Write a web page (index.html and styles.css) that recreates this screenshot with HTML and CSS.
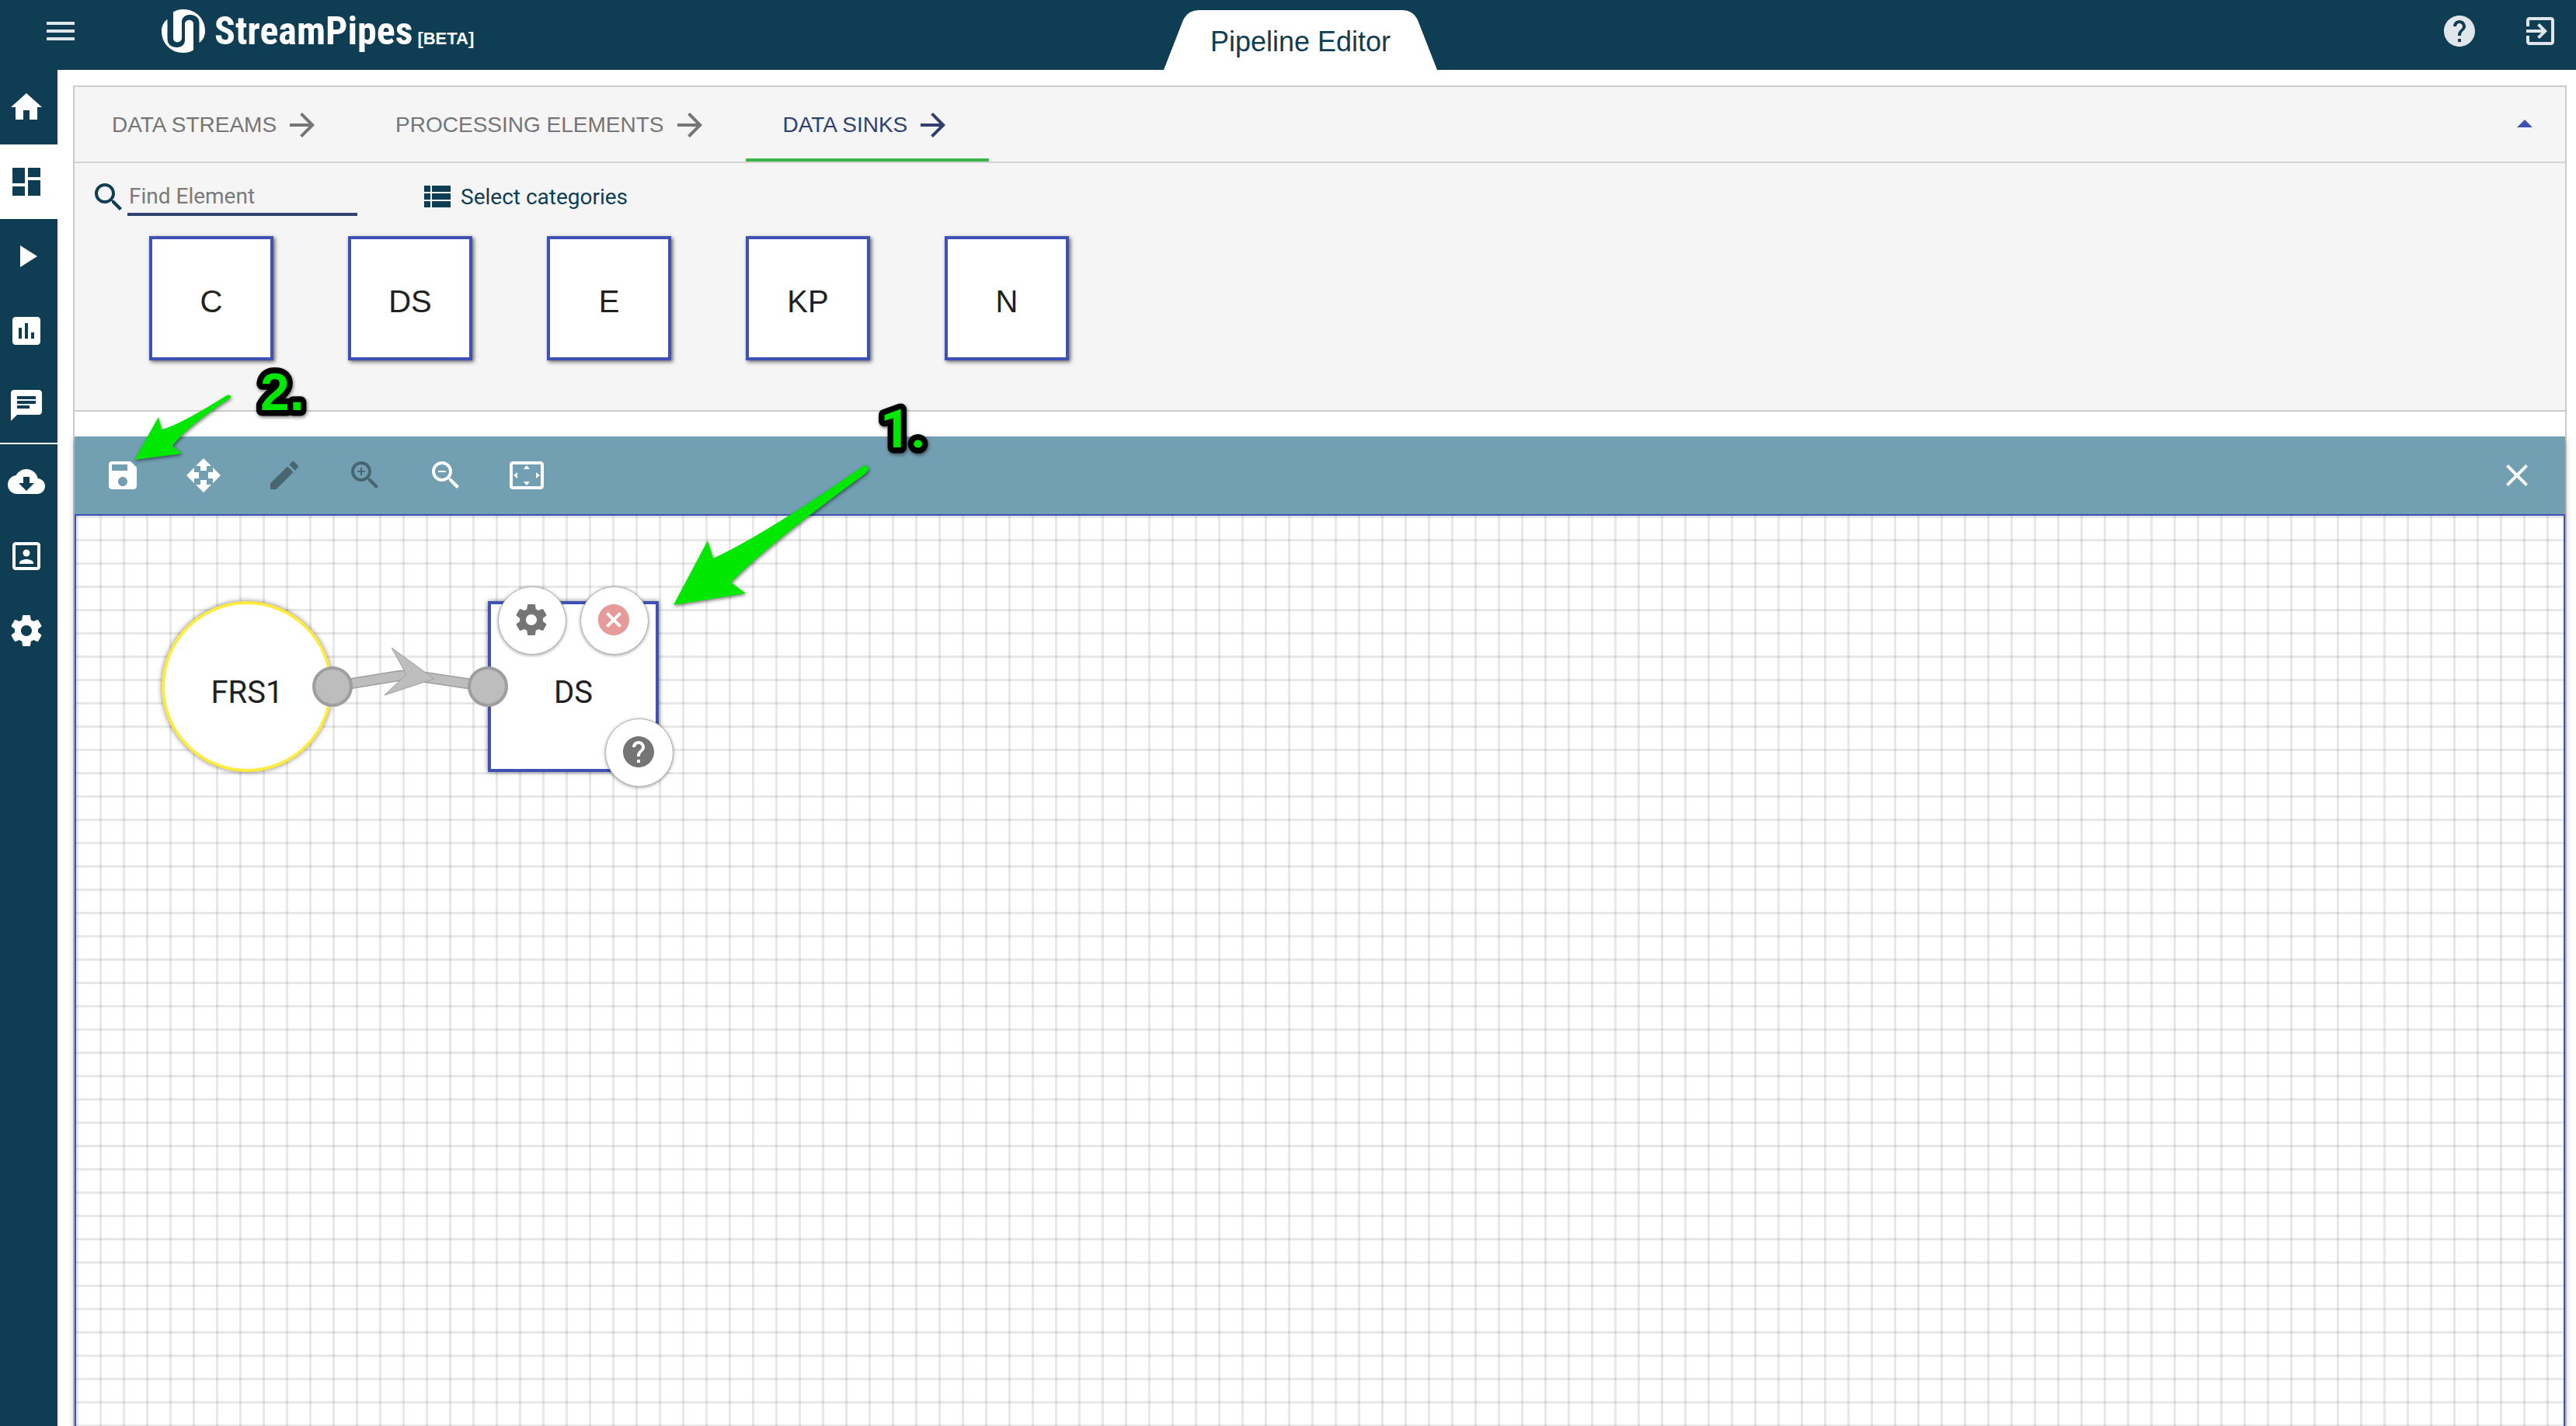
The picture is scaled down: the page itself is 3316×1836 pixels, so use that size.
FILE: index.html
```html
<!DOCTYPE html>
<html lang="en">
<head>
<meta charset="utf-8">
<title>StreamPipes - Pipeline Editor</title>
<link rel="stylesheet" href="styles.css">
</head>
<body>
<svg class="sprite" aria-hidden="true">
  <symbol id="menu" viewBox="0 0 24 24"><path d="M3 18h18v-2H3v2zm0-5h18v-2H3v2zm0-7v2h18V6H3z"/></symbol>
  <symbol id="help" viewBox="0 0 24 24"><path d="M12 2C6.48 2 2 6.48 2 12s4.48 10 10 10 10-4.480 10-10S17.520 2 12 2zm1 17h-2v-2h2v2zm2.070-7.750l-.9.920C13.450 12.900 13 13.500 13 15h-2v-.5c0-1.100.450-2.100 1.170-2.830l1.240-1.260c.370-.360.590-.860.590-1.410 0-1.100-.9-2-2-2s-2 .9-2 2H8c0-2.210 1.790-4 4-4s4 1.790 4 4c0 .880-.360 1.680-.930 2.250z"/></symbol>
  <symbol id="exit" viewBox="0 0 24 24"><path d="M10.090 15.590L11.500 17l5-5-5-5-1.410 1.410L12.670 11H3v2h9.670l-2.580 2.590zM19 3H5c-1.110 0-2 .9-2 2v4h2V5h14v14H5v-4H3v4c0 1.100.890 2 2 2h14c1.100 0 2-.9 2-2V5c0-1.100-.9-2-2-2z"/></symbol>
  <symbol id="home" viewBox="0 0 24 24"><path d="M10 20v-6h4v6h5v-8h3L12 3 2 12h3v8z"/></symbol>
  <symbol id="dashboard" viewBox="0 0 24 24"><path d="M3 13h8V3H3v10zm0 8h8v-6H3v6zm10 0h8V11h-8v10zm0-18v6h8V3h-8z"/></symbol>
  <symbol id="play" viewBox="0 0 24 24"><path d="M8 5v14l11-7z"/></symbol>
  <symbol id="chart" viewBox="0 0 24 24"><path d="M19 3H5c-1.100 0-2 .9-2 2v14c0 1.100.9 2 2 2h14c1.100 0 2-.9 2-2V5c0-1.100-.9-2-2-2zM9 17H7v-7h2v7zm4 0h-2V7h2v10zm4 0h-2v-4h2v4z"/></symbol>
  <symbol id="chat" viewBox="0 0 24 24"><path d="M20 2H4c-1.100 0-1.990.9-1.990 2L2 22l4-4h14c1.100 0 2-.9 2-2V4c0-1.100-.9-2-2-2zM6 9h12v2H6V9zm8 5H6v-2h8v2zm4-6H6V6h12v2z"/></symbol>
  <symbol id="cloud" viewBox="0 0 24 24"><path d="M19.350 10.040C18.670 6.590 15.640 4 12 4 9.110 4 6.600 5.640 5.350 8.040 2.340 8.360 0 10.910 0 14c0 3.310 2.690 6 6 6h13c2.760 0 5-2.240 5-5 0-2.640-2.050-4.780-4.650-4.960zM17 13l-5 5-5-5h3V9h4v4h3z"/></symbol>
  <symbol id="portrait" viewBox="0 0 24 24"><path d="M12 12.250c1.240 0 2.250-1.010 2.250-2.250S13.240 7.750 12 7.750 9.750 8.760 9.750 10s1.010 2.250 2.250 2.250zm4.500 4c0-1.500-3-2.250-4.500-2.250s-4.500.750-4.500 2.250V17h9v-.750zM19 3H5c-1.100 0-2 .9-2 2v14c0 1.100.9 2 2 2h14c1.100 0 2-.9 2-2V5c0-1.100-.9-2-2-2zm0 16H5V5h14v14z"/></symbol>
  <symbol id="gear" viewBox="0 0 24 24"><path d="M19.430 12.980c.040-.320.070-.640.070-.980s-.030-.660-.070-.980l2.110-1.650c.190-.150.240-.420.120-.640l-2-3.460c-.120-.220-.390-.300-.610-.220l-2.490 1c-.520-.400-1.080-.730-1.690-.980l-.380-2.650C14.460 2.180 14.250 2 14 2h-4c-.250 0-.460.180-.490.420l-.380 2.650c-.610.250-1.170.590-1.690.980l-2.490-1c-.230-.090-.490 0-.610.220l-2 3.460c-.130.220-.070.490.120.640l2.110 1.650c-.040.320-.070.650-.070.980s.030.660.070.980l-2.110 1.650c-.190.150-.240.420-.120.640l2 3.460c.120.220.390.300.610.220l2.490-1c.520.400 1.080.730 1.690.980l.380 2.650c.030.240.240.420.490.420h4c.250 0 .460-.180.490-.420l.380-2.650c.610-.250 1.170-.590 1.690-.980l2.490 1c.230.090.490 0 .610-.220l2-3.460c.120-.220.070-.490-.120-.640l-2.110-1.650zM12 15.500c-1.930 0-3.500-1.570-3.500-3.500s1.570-3.500 3.500-3.500 3.500 1.570 3.500 3.500-1.570 3.500-3.500 3.500z"/></symbol>
  <symbol id="arrow" viewBox="0 0 24 24"><path d="M12 4l-1.410 1.410L16.170 11H4v2h12.170l-5.580 5.590L12 20l8-8z"/></symbol>
  <symbol id="up" viewBox="0 0 24 24"><path d="M7 14l5-5 5 5z"/></symbol>
  <symbol id="search" viewBox="0 0 24 24"><path d="M15.500 14h-.790l-.280-.270C15.410 12.590 16 11.110 16 9.500 16 5.910 13.090 3 9.500 3S3 5.910 3 9.500 5.910 16 9.500 16c1.610 0 3.090-.590 4.230-1.570l.270.280v.790l5 4.990L20.490 19l-4.990-5zm-6 0C7.010 14 5 11.990 5 9.500S7.010 5 9.500 5 14 7.010 14 9.500 11.990 14 9.500 14z"/></symbol>
  <symbol id="list" viewBox="0 0 24 24"><path d="M4 14h4v-4H4v4zm0 5h4v-4H4v4zM4 9h4V5H4v4zm5 5h12v-4H9v4zm0 5h12v-4H9v4zM9 5v4h12V5H9z"/></symbol>
  <symbol id="save" viewBox="0 0 24 24"><path d="M17 3H5c-1.110 0-2 .9-2 2v14c0 1.100.890 2 2 2h14c1.100 0 2-.9 2-2V7l-4-4zm-5 16c-1.660 0-3-1.340-3-3s1.340-3 3-3 3 1.340 3 3-1.340 3-3 3zm3-10H5V5h10v4z"/></symbol>
  <symbol id="move" viewBox="0 0 24 24"><path d="M10 9h4V6h3l-5-5-5 5h3v3zm-1 1H6V7l-5 5 5 5v-3h3v-4zm14 2l-5-5v3h-3v4h3v3l5-5zm-9 3h-4v3H7l5 5 5-5h-3v-3z"/></symbol>
  <symbol id="edit" viewBox="0 0 24 24"><path d="M3 17.250V21h3.750L17.810 9.940l-3.750-3.750L3 17.250zM20.710 7.040c.390-.390.390-1.020 0-1.410l-2.340-2.340c-.390-.390-1.020-.390-1.410 0l-1.830 1.830 3.750 3.750 1.830-1.830z"/></symbol>
  <symbol id="zoomin" viewBox="0 0 24 24"><use href="#search"/><path d="M12 10h-2v2H9v-2H7V9h2V7h1v2h2v1z"/></symbol>
  <symbol id="zoomout" viewBox="0 0 24 24"><use href="#search"/><path d="M7 9h5v1H7z"/></symbol>
  <symbol id="fit" viewBox="0 0 24 24"><path d="M12.010 5.500L10 8h4l-1.990-2.500zM18 10v4l2.500-1.990L18 10zM6 10l-2.500 2.010L6 14v-4zm8 6h-4l2.010 2.500L14 16zm7-13H3c-1.100 0-2 .9-2 2v14c0 1.100.9 2 2 2h18c1.100 0 2-.9 2-2V5c0-1.100-.9-2-2-2zm0 16.010H3V4.990h18v14.020z"/></symbol>
  <symbol id="close" viewBox="0 0 24 24"><path d="M19 6.410L17.590 5 12 10.590 6.410 5 5 6.410 10.590 12 5 17.590 6.410 19 12 13.410 17.590 19 19 17.590 13.410 12z"/></symbol>
  <symbol id="cancel" viewBox="0 0 24 24"><path d="M12 2C6.470 2 2 6.470 2 12s4.470 10 10 10 10-4.470 10-10S17.530 2 12 2zm5 13.590L15.590 17 12 13.410 8.410 17 7 15.590 10.590 12 7 8.410 8.410 7 12 10.590 15.590 7 17 8.410 13.410 12 17 15.590z"/></symbol>
</svg>

<header class="topbar">
  <div class="topbar-left">
    <button class="icon-btn" aria-label="Menu"><svg class="icon"><use href="#menu"/></svg></button>
    <a class="brand" href="#">
      <svg class="brand-mark" viewBox="0 0 56 56" aria-hidden="true">
        <path id="hook" d="M7.500 13C2.500 16 0 22 0 28c0 16 12 28 28 28 5 0 9-1 13-3.500V19c0-7-11-7-11 0v21c0 5-4 9-10 9-8 0-12.500-4-12.500-11z"/>
        <use href="#hook" transform="rotate(180 28 28)"/>
      </svg>
      <span class="brand-name">StreamPipes</span>
      <span class="brand-tag">[BETA]</span>
    </a>
  </div>
  <h1 class="page-tab">
    <svg class="page-tab-shape" viewBox="0 0 352 77" aria-hidden="true"><path d="M0 77L25 13Q31 0 46 0H306Q321 0 327 13L352 77z"/></svg>
    <span class="page-tab-text">Pipeline Editor</span>
  </h1>
  <div class="topbar-right">
    <button class="icon-btn" aria-label="Help"><svg class="icon"><use href="#help"/></svg></button>
    <button class="icon-btn" aria-label="Log out"><svg class="icon"><use href="#exit"/></svg></button>
  </div>
</header>

<div class="shell">
  <nav class="sidebar" aria-label="Main">
    <a class="side-item" href="#" aria-label="Home"><svg class="icon"><use href="#home"/></svg></a>
    <a class="side-item side-active" href="#" aria-label="Pipeline editor"><svg class="icon"><use href="#dashboard"/></svg></a>
    <a class="side-item" href="#" aria-label="Pipelines"><svg class="icon"><use href="#play"/></svg></a>
    <a class="side-item" href="#" aria-label="Visualizations"><svg class="icon"><use href="#chart"/></svg></a>
    <a class="side-item" href="#" aria-label="Notifications"><svg class="icon"><use href="#chat"/></svg></a>
    <div class="side-rule"></div>
    <a class="side-item" href="#" aria-label="Install elements"><svg class="icon"><use href="#cloud"/></svg></a>
    <a class="side-item" href="#" aria-label="My elements"><svg class="icon"><use href="#portrait"/></svg></a>
    <a class="side-item" href="#" aria-label="Configuration"><svg class="icon"><use href="#gear"/></svg></a>
  </nav>

  <main class="editor">
    <section class="palette">
      <div class="tabs">
        <div class="tab-list" role="tablist">
          <button class="tab" role="tab">DATA STREAMS<svg class="icon"><use href="#arrow"/></svg></button>
          <button class="tab" role="tab">PROCESSING ELEMENTS<svg class="icon"><use href="#arrow"/></svg></button>
          <button class="tab tab-active" role="tab" aria-selected="true">DATA SINKS<svg class="icon"><use href="#arrow"/></svg></button>
        </div>
        <button class="icon-btn collapse" aria-label="Collapse"><svg class="icon"><use href="#up"/></svg></button>
      </div>
      <div class="filters">
        <label class="find"><svg class="icon"><use href="#search"/></svg><input class="find-input" type="text" placeholder="Find Element" aria-label="Find Element"></label>
        <button class="categories"><svg class="icon"><use href="#list"/></svg>Select categories</button>
      </div>
      <div class="elements">
        <div class="element">C</div>
        <div class="element">DS</div>
        <div class="element">E</div>
        <div class="element">KP</div>
        <div class="element">N</div>
      </div>
    </section>

    <section class="assembly">
      <div class="toolbar">
        <div class="tools">
          <button class="tool" aria-label="Save"><svg class="icon"><use href="#save"/></svg></button>
          <button class="tool" aria-label="Pan"><svg class="icon"><use href="#move"/></svg></button>
          <button class="tool" aria-label="Select" disabled><svg class="icon"><use href="#edit"/></svg></button>
          <button class="tool" aria-label="Zoom in" disabled><svg class="icon"><use href="#zoomin"/></svg></button>
          <button class="tool" aria-label="Zoom out"><svg class="icon"><use href="#zoomout"/></svg></button>
          <button class="tool" aria-label="Auto layout"><svg class="icon"><use href="#fit"/></svg></button>
        </div>
        <button class="tool" aria-label="Clear"><svg class="icon"><use href="#close"/></svg></button>
      </div>
      <div class="canvas">
        <div class="node node-stream">FRS1</div>
        <div class="node node-sink">DS</div>
        <svg class="wires" viewBox="0 0 260 90" aria-hidden="true">
          <path class="wire-edge" d="M30 54L116 40Q126 39 136 40L230 54"/>
          <path class="wire-fill" d="M30 54L116 40Q126 39 136 40L230 54"/>
          <path class="wire-part" d="M106 4L161 44L97 65L125 38z"/>
          <circle class="wire-end" cx="30" cy="54" r="24"/>
          <circle class="wire-end" cx="230" cy="54" r="24"/>
        </svg>
        <button class="node-action action-settings" aria-label="Configure"><svg class="icon"><use href="#gear"/></svg></button>
        <button class="node-action action-delete" aria-label="Delete"><svg class="icon"><use href="#cancel"/></svg></button>
        <button class="node-action action-help" aria-label="Element help"><svg class="icon"><use href="#help"/></svg></button>
      </div>
    </section>
  </main>
</div>

<svg class="notes" viewBox="0 0 1300 840">
  <g class="note-arrow">
    <path d="M867 779L911 696L918 719Q985 688 1111 600Q1117 598 1118 603Q1118 606 1115 609Q985 704 941 750L960 764z"/>
    <path d="M173 592L204 537L208 553Q230 548 292 509Q297 507 297 512Q240 550 222 574L234 584z"/>
  </g>
  <text class="note-text note-first" x="1133" y="576">1.</text>
  <text class="note-text" x="335" y="528">2.</text>
</svg>
</body>
</html>
```
FILE: styles.css
```css
* { box-sizing: border-box; }

body {
  margin: 0;
  position: relative;
  min-height: 100vh;
  display: flex;
  flex-direction: column;
  background: #fff;
  font-family: "Liberation Sans", Arial, sans-serif;
  font-size: 28px;
  color: #212121;
}

button {
  border: 0;
  padding: 0;
  background: none;
  font: inherit;
  color: inherit;
}

a { color: inherit; text-decoration: none; }

.sprite { display: none; }

.icon {
  width: 48px;
  height: 48px;
  flex: none;
  display: block;
  fill: currentColor;
}

/* Top bar */
.topbar {
  height: 90px;
  padding-left: 32px;
  display: grid;
  grid-template-columns: 1fr 352px 1fr;
  background: #0f3e54;
  color: #fff;
}

.topbar-left { display: flex; align-items: flex-start; padding: 12px 0 0 22px; }
.topbar-right { display: flex; justify-content: flex-end; gap: 56px; padding: 16px 22px 0 0; }
.icon-btn { height: 48px; color: #e1e6ea; }
.topbar-left .icon-btn { margin-top: 4px; }

.brand { display: flex; margin-left: 106px; }
.brand-mark { width: 56px; height: 56px; fill: #fff; }
.brand-name {
  margin-left: 12px;
  font: bold 50px/56px "Roboto Condensed", Roboto, sans-serif;
}
.brand-tag { margin-left: 6px; padding-top: 22px; font: bold 22px/32px "Liberation Sans", Arial, sans-serif; }

.page-tab {
  position: relative;
  margin: 13px 0 0;
  height: 77px;
  text-align: center;
  font-size: 36px;
  font-weight: 400;
  line-height: 82px;
  color: #0f3e54;
}
.page-tab-shape { position: absolute; inset: 0; width: 352px; height: 77px; fill: #fff; }
.page-tab-text { position: relative; }

/* Side navigation */
.shell { flex: 1; display: flex; }
.sidebar { width: 74px; flex: none; background: #0f3e54; color: #fff; }
.side-item { height: 96px; padding-left: 10px; display: flex; align-items: center; }
.side-active { background: #fff; color: #0f3e54; }
.side-rule { height: 2px; background: #fff; }

/* Editor */
.editor {
  flex: 1;
  min-width: 0;
  margin: 20px 12px 0 20px;
  border: 2px solid #ccc;
  border-bottom: 0;
  display: flex;
  flex-direction: column;
}

.palette { background: #f5f5f5; border-bottom: 2px solid #ccc; }

.tabs {
  height: 98px;
  display: flex;
  justify-content: space-between;
  border-bottom: 2px solid #d4d4d4;
  color: #757575;
}
.tab-list { display: flex; }
.tab {
  display: flex;
  align-items: center;
  gap: 9px;
  padding: 6px 48px 0;
  border-bottom: 4px solid transparent;
}
.tab-active { color: #303f6e; border-bottom-color: #39b54a; }
.collapse { margin: 24px 28px 0 0; color: #3f51b5; }

.filters {
  display: flex;
  padding: 20px 20px 0;
  font-family: Roboto, sans-serif;
  color: #0f3e54;
}
.find { width: 344px; display: flex; }
.find-input {
  width: 296px;
  height: 48px;
  padding: 0 2px;
  border: 0;
  border-bottom: 4px solid #2f4272;
  background: none;
  font: inherit;
  color: #0f3e54;
}
.find-input::placeholder { color: #7b7b7b; opacity: 1; }
.categories { display: flex; align-items: center; gap: 7px; margin-left: 78px; height: 48px; padding-bottom: 2px; }

.elements { display: flex; gap: 96px; padding: 26px 96px 64px; }
.element {
  width: 160px;
  height: 160px;
  padding-top: 4px;
  border: 4px solid #3f51b5;
  background: #fff;
  box-shadow: 2px 2px 5px rgba(0, 0, 0, .6);
  font-size: 40px;
  line-height: 152px;
  text-align: center;
}

/* Assembly area */
.assembly {
  flex: 1;
  margin-top: 32px;
  display: flex;
  flex-direction: column;
  box-shadow: 0 4px 8px rgba(0, 0, 0, .3);
}
.toolbar {
  height: 100px;
  padding: 0 22px;
  display: flex;
  align-items: center;
  justify-content: space-between;
  background: #729fb2;
  color: #fff;
}
.tools { display: flex; gap: 24px; }
.tool { width: 80px; height: 80px; display: flex; align-items: center; justify-content: center; }
.tool:disabled { color: #48666f; }

.canvas {
  flex: 1;
  min-height: 400px;
  position: relative;
  border: 2px solid #3f51b5;
  border-bottom: 0;
  background-image:
    linear-gradient(rgba(0, 0, 0, .09) 3px, transparent 3px),
    linear-gradient(90deg, rgba(0, 0, 0, .09) 3px, transparent 3px);
  background-size: 30px 30px;
}

.node {
  position: absolute;
  top: 110px;
  width: 220px;
  height: 220px;
  padding-top: 8px;
  background: #fff;
  box-shadow: 0 0 6px rgba(0, 0, 0, .5);
  font: 40px/212px Roboto, sans-serif;
  text-align: center;
}
.node-stream { left: 110px; border: 4px solid #ffeb3b; border-radius: 50%; }
.node-sink { left: 530px; border: 4px solid #3f51b5; }

.wires { position: absolute; left: 300px; top: 166px; width: 260px; height: 90px; }
.wire-edge { fill: none; stroke: #9e9e9e; stroke-width: 14px; }
.wire-fill { fill: none; stroke: #bdbdbd; stroke-width: 11px; }
.wire-part { fill: #bdbdbd; stroke: #9e9e9e; stroke-width: 1px; }
.wire-end { fill: #bdbdbd; stroke: #9e9e9e; stroke-width: 4px; }

.node-action {
  position: absolute;
  width: 88px;
  height: 88px;
  padding: 0 2px 2px 0;
  display: flex;
  align-items: center;
  justify-content: center;
  border: 1px solid #b4b4b4;
  border-radius: 50%;
  background: #fff;
  box-shadow: 0 1px 4px rgba(0, 0, 0, .4);
  color: #757575;
}
.action-settings { left: 543px; top: 91px; }
.action-delete { left: 649px; top: 91px; color: #e69a9a; }
.action-help { left: 681px; top: 261px; }

/* Step markers drawn over the editor */
.notes {
  position: absolute;
  left: 0;
  top: 0;
  width: 1300px;
  height: 840px;
  pointer-events: none;
}
.note-arrow { fill: #00e800; filter: drop-shadow(1px 2px 2px rgba(0, 0, 0, .5)); }
.note-text {
  font: bold 68px "Liberation Sans", Arial, sans-serif;
  fill: #00e800;
  stroke: #000;
  stroke-width: 15px;
  stroke-linejoin: round;
  paint-order: stroke;
  filter: drop-shadow(1px 2px 2px rgba(0, 0, 0, .5));
}
.note-first { font-family: Roboto, sans-serif; }
```
